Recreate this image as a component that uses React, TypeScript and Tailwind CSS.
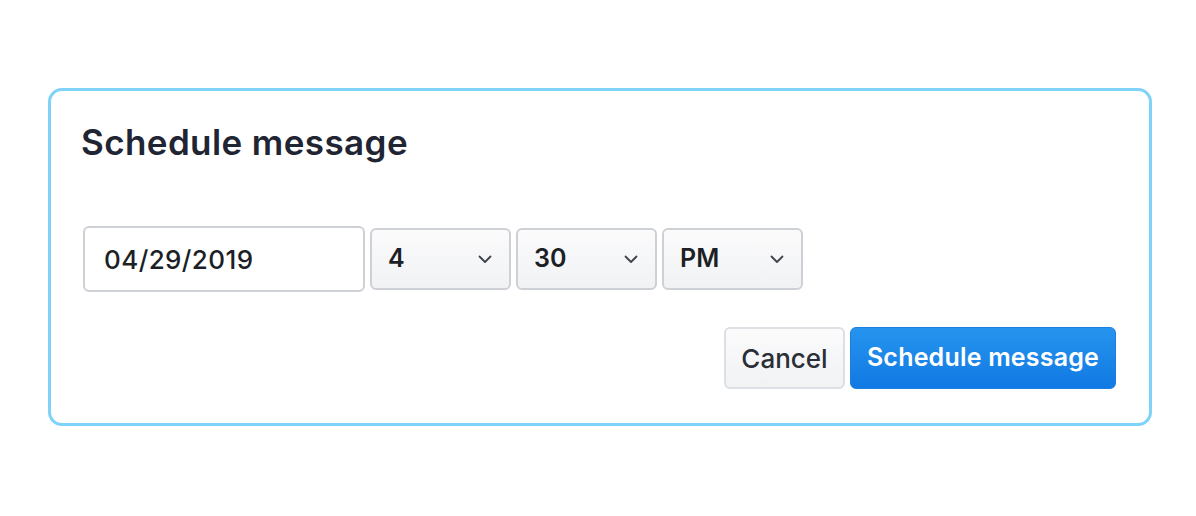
import React from 'react';

const Chevron: React.FC = () => (
  <svg width="14" height="9" viewBox="0 0 14 9" fill="none" className="shrink-0">
    <path d="M1.5 1.5 L7 7 L12.5 1.5" stroke="#3d434c" strokeWidth="1.8" strokeLinecap="round" strokeLinejoin="round" />
  </svg>
);

const Select: React.FC<{ value: string }> = ({ value }) => (
  <div className="w-[141px] h-[62px] flex items-center justify-between pl-[16px] pr-[17px] rounded-[6px] border-2 border-[#cdd1d6] bg-gradient-to-b from-[#fbfbfc] to-[#f1f2f4]">
    <span className="text-[25px] font-semibold text-[#1c1f26]">{value}</span>
    <Chevron />
  </div>
);

const App: React.FC = () => {
  return (
    <div className="w-[1196px] h-[516px] bg-white pt-[88px] pl-[48px]" style={{ fontFamily: 'Inter, "Open Sans", sans-serif' }}>
      <div className="w-[1104px] h-[338px] border-[3px] border-[#7fd2f8] rounded-[14px] pt-[28px] pl-[30px] pr-[33px]">
        {/* title */}
        <h1 className="text-[35px] font-semibold text-[#1f2533] leading-[46px] tracking-[0.4px]">Schedule message</h1>

        {/* date + time row */}
        <div className="flex items-center gap-[5px] mt-[61px] pl-[2px]">
          <div className="w-[282px] h-[66px] flex items-center pl-[19px] rounded-[6px] border-2 border-[#cdd1d6] bg-white">
            <span className="text-[26px] font-medium text-[#1c1f26] tracking-[0.4px]">04/29/2019</span>
          </div>
          <Select value="4" />
          <Select value="30" />
          <Select value="PM" />
        </div>

        {/* actions */}
        <div className="flex justify-end gap-[5px] mt-[35px]">
          <button className="w-[121px] h-[62px] rounded-[6px] border-2 border-[#dcdfe3] bg-gradient-to-b from-[#fbfbfc] to-[#f1f2f4] text-[26px] font-medium text-[#2a2e36]">
            Cancel
          </button>
          <button className="w-[266px] h-[62px] rounded-[6px] border border-[#1a7fe0] bg-gradient-to-b from-[#2694ee] to-[#1179e3] text-[25px] font-semibold text-white tracking-[0.2px]">
            Schedule message
          </button>
        </div>
      </div>
    </div>
  );
};

export default App;
